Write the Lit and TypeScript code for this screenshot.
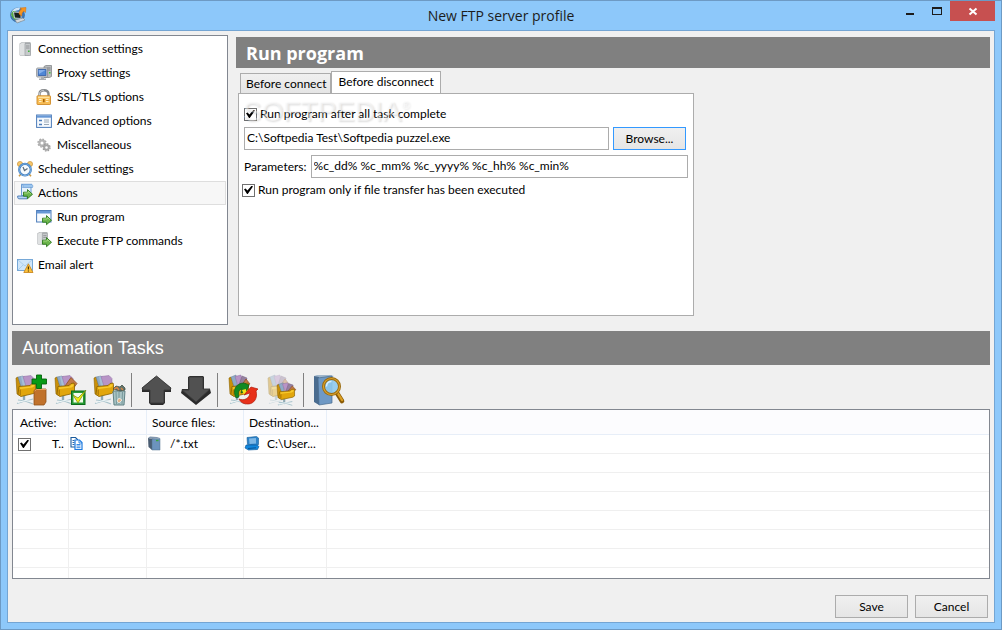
import { LitElement, html, css, svg, nothing } from "lit";
import { customElement, property, state } from "lit/decorators.js";
import { classMap } from "lit/directives/class-map.js";

const serverBody = svg`
  <path d="M2.500 2.500 5 1h8.500v12.500L11 15H3.500l-1-1z" fill="#b4b7b9"/>
  <path d="M3 3 5.500 1.500h2.500v13H3.500L3 14z" fill="#dfe1e2"/>
  <path d="M8 2.500h5.500v12H8z" fill="#c6c9cb" stroke="#999da0" stroke-width=".7"/>
  <path d="M9 5h3.500M9 7h3.500" stroke="#85898c" stroke-width=".8"/>
  <path d="M11 9.500h1.600v1.600H11z" fill="#3fb43b"/>`;

const greenArrow = svg`
  <path d="M6.5 9.2h4V6.6l5 4.7-5 4.4v-2.5h-4z" fill="#6cb54c" stroke="#2f7a1f" stroke-width=".9" stroke-linejoin="round"/>
  <path d="M7.2 10h4V8.3l2.6 2.5" fill="none" stroke="#b2e08f" stroke-width=".8"/>`;

const wires = svg`
  <path d="M8 21v6" stroke="#8fa9b3" stroke-width="2.400"/>
  <path d="M2 26l8 1 7-2M1 29.500l8-2.500 8 3" stroke="#a9c4cc" stroke-width="1.200" fill="none"/>
  <path d="M2 28.500l7-2 7 1" stroke="#eef6f8" stroke-width="1" fill="none"/>`;
const folderSide = svg`<path d="M0 4l2-1 3 9v10l-4-2z" fill="#c98f08" stroke="#8a6200" stroke-width=".6"/>`;
const folderFront = svg`
  <path d="M3 12.500 14 11.500l2-2 3-.5.500 1.500V18l-2 1.500L5 22.500 2 20.500z" fill="#e2a60c" stroke="#8a6200" stroke-width=".8" stroke-linejoin="round"/>
  <path d="M3.500 13.500 14.500 12.500l2-2 2-.3v1.800l-2 1.500-12 1.500z" fill="#f8cb2e"/>
  <path d="M3.500 16v4.500l1.500 1V15.500z" fill="#b57f05"/>`;
const papers = svg`
  ${folderSide}
  <path d="M2 3l5-1 1 10-3 .5z" fill="#8fabc6" stroke="#65809c" stroke-width=".5"/>
  <path d="M5 2.500 9 2l1 10-3 .5z" fill="#a6bfd6"/>
  <path d="M7 2.500 15 1.500l3 3v5l-3 2.500-5 .3z" fill="#b894c6" stroke="#8f6da2" stroke-width=".5"/>`;
const folder = svg`${wires}${papers}${folderFront}`;
const fannedFolder = svg`
  ${wires}${folderSide}
  <path d="M2 3l5-2 1 11-3 .5z" fill="#8fabc6" stroke="#65809c" stroke-width=".5"/>
  <path d="M6 2.500 12 1l1 9-4 2z" fill="#b894c6" stroke="#8f6da2" stroke-width=".5"/>
  <path d="M10 11 13 2l5 2-2 7z" fill="#96809f" stroke="#6e5c80" stroke-width=".5"/>
  <path d="M12 12 17 5l4 5-3 2z" fill="#c27a48" stroke="#87491d" stroke-width=".7"/>
  ${folderFront}`;

const art = {
  app: svg`
    <circle cx="7.500" cy="8" r="7" fill="#3f78b8" stroke="#2e5f96" stroke-width=".6"/>
    <path d="M2 4c2-3 5-4 8-3L9 3 5 4 3 7 1 9z" fill="#cfe3f5"/>
    <path d="M1 7l2-3 3 0-1 4 2 5c-3 0-5-2-6-6z" fill="#55a845"/>
    <path d="M3.500 5 11 5.500v6L4.500 11z" fill="#17221f" stroke="#d4dce2" stroke-width=".9"/>
    <path d="M5 13 13 11l2 2-8 3z" fill="#d5d9dc" stroke="#7b848b" stroke-width=".6"/>
    <path d="M10 1l6-.5-.5 5-1.600-1.500c-1.800 1.500-2.400 3-2 5L9 7c0-2 .8-4 2.900-5.200z" fill="#f7941d" stroke="#d46b08" stroke-width=".5"/>`,
  server: serverBody,
  proxy: svg`
    <path d="M8 1.500 10 .5h5.500v11l-2 1H8z" fill="#b9bcbe" stroke="#85898c" stroke-width=".8"/>
    <path d="M11 3h3.500M11 5h3.500" stroke="#6e7275" stroke-width=".8"/><path d="M13 7h1.500v1.500H13z" fill="#3fc43b"/>
    <rect x=".6" y="3" width="11" height="9" rx="1" fill="#d3d6da" stroke="#85898c" stroke-width=".8"/>
    <rect x="2.200" y="4.600" width="7.800" height="5.800" fill="#4f87d6" stroke="#2d5aa4" stroke-width=".8"/>
    <path d="M2.700 5h6.800L3 9z" fill="#86b1ec"/><path d="M5 12h3v1.600h2v1.500H3v-1.500h2z" fill="#aaaeb2"/>`,
  lock: svg`
    <path d="M3.500 8V5C3.500 2.700 5.200 1.300 8 1.300s4.500 1.400 4.500 3.700v3" fill="none" stroke="#85888b" stroke-width="2.400"/>
    <path d="M3.500 7V5C3.500 2.700 5.200 1.300 8 1.300" fill="none" stroke="#c9cbcd" stroke-width="1"/>
    <rect x="1" y="6.800" width="13.500" height="8.700" rx=".6" fill="#f8bd55" stroke="#cf8a28" stroke-width=".9"/>
    <path d="M2 7.600h11.500v1.500H2z" fill="#ffe3a1"/>
    <path d="M3 10.500h2.500M3 12.500h2.500M10 10.500h2.500M10 12.500h2.500" stroke="#fff0cb" stroke-width="1"/>
    <path d="M7 10h1.600v3.200H7z" fill="#a56108"/>`,
  form: svg`
    <rect x=".6" y="2" width="14.800" height="12.400" fill="#f5f9fd" stroke="#4c7cba" stroke-width="1"/>
    <path d="M1 2.500h14v2.200H1z" fill="#6798d6"/>
    <path d="M3 7.500h3M3 11.500h3" stroke="#4c7cba" stroke-width="1.500"/>
    <path d="M8 7h5M8 9h5M8 11.500h5" stroke="#9aa8b7" stroke-width="1"/>`,
  gears: svg`
    <circle cx="6" cy="6" r="2.600" fill="none" stroke="#b4b4b4" stroke-width="2.200"/>
    <circle cx="6" cy="6" r="4" fill="none" stroke="#a9a9a9" stroke-width="1.300" stroke-dasharray="1.600 1.540"/>
    <circle cx="10.500" cy="10.500" r="2.300" fill="none" stroke="#a6a6a6" stroke-width="2"/>
    <circle cx="10.500" cy="10.500" r="3.600" fill="none" stroke="#999" stroke-width="1.200" stroke-dasharray="1.450 1.380"/>`,
  clock: svg`
    <circle cx="3" cy="3" r="2.600" fill="#f5c56a" stroke="#c48a2b" stroke-width=".6"/>
    <circle cx="13" cy="3" r="2.600" fill="#f5c56a" stroke="#c48a2b" stroke-width=".6"/>
    <path d="M4 13l-2 2.300M12 13l2 2.300" stroke="#c99a48" stroke-width="1.600"/>
    <circle cx="8" cy="8.700" r="5.800" fill="#f6fafd" stroke="#3f7cbd" stroke-width="2.200"/>
    <circle cx="8" cy="8.700" r="5.900" fill="none" stroke="#7fb2e3" stroke-width=".9"/>
    <path d="M6 6 7.500 9.500 10.500 7.500" fill="none" stroke="#5b6a78" stroke-width="1.200"/>`,
  actions: svg`<g transform="translate(0 -2)">
    <path d="M4.500 1.500h10.500c-1 .7-1 1.500-1 2.500v8.500H4.500z" fill="#e6f1fc" stroke="#5c92cf" stroke-width=".9"/>
    <path d="M4.500 1.200c1.600.3 1.700 2.500 1 3.300h10c.5-1 .5-2.700-1-3.300z" fill="#9cc6ef" stroke="#5c92cf" stroke-width=".6"/>
    <path d="M.7 13h9.500v2.800H2c-1 0-1.500-1-1.300-2.800z" fill="#b7d5f4" stroke="#4676b3" stroke-width=".9"/>${greenArrow}</g>`,
  run: svg`
    <rect x=".6" y="1.500" width="14.400" height="11.500" fill="#f8fbff" stroke="#4c7cba"/>
    <path d="M1 2h13.700v2.500H1z" fill="#6798d6"/>${greenArrow}`,
  exec: svg`<g transform="translate(0 -2)"><g transform="translate(-1 0) scale(.92)">${serverBody}</g>${greenArrow}</g>`,
  email: svg`
    <rect x=".5" y="2.500" width="15" height="11" fill="#cfe6fa" stroke="#6aa0d3" stroke-width=".9"/>
    <path d="M1 3l7 6 7-6M1 13l5-5M15 13l-5-5" fill="none" stroke="#a3c8e8" stroke-width=".8"/>
    <path d="M11.400 6.800 16 15.500H6.800z" fill="#fbc13c" stroke="#c77f12" stroke-width=".8" stroke-linejoin="round"/>
    <path d="M11.400 9.500v3M11.400 13.400v1.200" stroke="#4c3600" stroke-width="1.200"/>`,
  copy: svg`
    <path d="M1 1.500h4.500l2 2v7.500H1z" fill="#fff" stroke="#17589c" stroke-width="1.100"/>
    <path d="M2.500 4.500h2M2.500 6.500h2M2.500 8.500h2" stroke="#17589c" stroke-width=".9"/>
    <path d="M5 4h4.500L12 6.500V13.500H5z" fill="#fff" stroke="#1e7be0" stroke-width="1.200"/>
    <path d="M9 4.500V7h3M6.500 8.500h4M6.500 10h4M6.500 11.700h4" fill="none" stroke="#1e7be0" stroke-width=".9"/>`,
  host: svg`
    <path d="M0 2 2 .5 9 1l3 1-8 1z" fill="#8196ae"/><path d="M0 2l4 1v11L.5 11z" fill="#4a5d72"/>
    <path d="M4 3l8-.5v11.500H4z" fill="#6c93bd" stroke="#50708f" stroke-width=".5"/>
    <path d="M8 4.500h2.500" stroke="#39a53a" stroke-width="1.400"/>`,
  pc: svg`
    <path d="M2 1.500 11.500.5 13.500 2v6.500l-2 1L2.500 8.500z" fill="#2c83c9" stroke="#135a97" stroke-width=".6"/>
    <path d="M4 2.500l7-.5v5.500L4.500 8z" fill="#7fb8e6"/>
    <path d="M1 9l11 0 2 1.500-1.500 3-9 .5L0 12z" fill="#1287dd" stroke="#0b5596" stroke-width=".6"/>
    <path d="M3 12.500l8-.7" stroke="#0b5596" stroke-width="1"/>`,
  add: svg`${folder}
    <path d="M18 16.500 20 15h10v13l-2 3H18z" fill="#c0722c" stroke="#8f501a" stroke-width=".8"/><path d="M18.500 17l2-1.500H30" stroke="#e5a262" fill="none"/>
    <path d="M20.500 1h5v4h5v5h-5v4.500h-5V10H16V5h4.500z" fill="#079a16" stroke="#04640c" stroke-width=".9"/>`,
  edit: svg`${wires}${papers}
    <path d="M10 12l6-8.500 6 6-3 4-6 1z" fill="#c27a48" stroke="#87491d" stroke-width=".7"/>${folderFront}
    <rect x="16.500" y="17" width="13.500" height="13.500" fill="#269b35" stroke="#0c6a19"/>
    <rect x="18.500" y="19" width="9.500" height="9.500" fill="#f3fbe9"/>
    <path d="M18 21l5 3 8-8-8 13z" fill="#f6ec12" stroke="#6d8b0a" stroke-width=".7"/>`,
  remove: svg`${folder}
    <path d="M19 17h12l-1 14h-10z" fill="#a8c3c4" stroke="#55777a" stroke-width=".9"/>
    <path d="M22 18l.5 12M25 18v12M28.500 18l-.5 12" stroke="#6b8e91" stroke-width=".8"/>
    <path d="M25 24l3 2-3 3-2-2z" stroke="#fff" fill="#e2b489" stroke-width=".6"/>
    <path d="M19 15l3-3 4 1 2-2 3 3v2l-5 1z" fill="#64756b" stroke="#36463c" stroke-width=".7"/>
    <path d="M20 15l3-1.500 2 2.500M27 14l2 2" stroke="#d98646" stroke-width="1.400" fill="none"/>`,
  up: svg`<path d="M14 3h2l14 11v4h-6v11l-2 2H10l-2-2V18H1v-4z" fill="#2b2b2b"/>
    <path d="M15.500 2 30 14l-1 2h-6v13H9V16H2l-1-2z" fill="#515151" stroke="#3a3a3a" stroke-width=".9" stroke-linejoin="round"/>`,
  down: svg`<path d="M8 3l2-1h13l1 1v12h6l1 4-15 12L1 19l1-4h6z" fill="#2b2b2b"/>
    <path d="M9 3h14v12h7L16 28 2 16h7z" fill="#515151" stroke="#3a3a3a" stroke-width=".9" stroke-linejoin="round"/>`,
  refresh: svg`<g transform="translate(2 0)">${fannedFolder}</g>
    <path d="M9 24C5 16 9 9 17 9l5 2-2 5-3 2-3 1 1-4c-4 1-4 4-3 8z" fill="#118a22" stroke="#0b5c16" stroke-width=".7"/>
    <path d="M15 16l4-1v3l-2 3z" fill="#f2e21b"/>
    <path d="M17 21l7-8 7 2-2 2c2 7-2 13-8 13-4 0-7-1-9-5 5 2 10 0 11-6z" fill="#e8311a" stroke="#b01c0c" stroke-width=".7"/>`,
  duplicate: svg`<g opacity=".4" transform="translate(2 0)">${fannedFolder}</g>
    <g transform="translate(11 8) scale(.9 .78)">${fannedFolder}</g>`,
  search: svg`
    <path d="M1 2l3-1h13l4 1-3 2H5z" fill="#9fb6cb"/><path d="M1 2l5 1v28l-5-3z" fill="#4a6c8f"/>
    <path d="M5 4l14-2v27L6 31z" fill="#6f99c4" stroke="#486b8e" stroke-width=".7"/>
    <path d="M24 19l5 8" stroke="#8a5b06" stroke-width="4.600" stroke-linecap="round"/>
    <path d="M24 18l5 8" stroke="#dc9f22" stroke-width="2.300" stroke-linecap="round"/>
    <circle cx="18.500" cy="12.500" r="8" fill="#8fcaec" fill-opacity=".9" stroke="#9a6a0c" stroke-width="3"/>
    <circle cx="18.500" cy="12.500" r="8" fill="none" stroke="#d9a12b" stroke-width="1.200"/>
    <path d="M13.500 12.500c0-3 2-5 5-5" stroke="#d8f0fc" stroke-width="1.400" fill="none"/>`,
};
type IconName = keyof typeof art;

const icon = (name: IconName, size = 16) => html`<svg
  width=${size} height=${size} viewBox="0 0 ${size} ${size}" aria-hidden="true">${art[name]}</svg>`;

interface NavItem { id: string; label: string; icon: IconName; children?: NavItem[] }

const NAV: NavItem[] = [
  { id: "connection", label: "Connection settings", icon: "server", children: [
    { id: "proxy", label: "Proxy settings", icon: "proxy" },
    { id: "ssl", label: "SSL/TLS options", icon: "lock" },
    { id: "advanced", label: "Advanced options", icon: "form" },
    { id: "misc", label: "Miscellaneous", icon: "gears" },
  ] },
  { id: "scheduler", label: "Scheduler settings", icon: "clock" },
  { id: "actions", label: "Actions", icon: "actions", children: [
    { id: "run", label: "Run program", icon: "run" },
    { id: "exec", label: "Execute FTP commands", icon: "exec" },
  ] },
  { id: "email", label: "Email alert", icon: "email" },
];

const controls = css`
  *, *::before, *::after { box-sizing: border-box; }
  button, input { font: inherit; color: inherit; margin: 0; }
  svg { display: block; flex: none; overflow: visible; }
  .check {
    appearance: none; flex: none; width: 13px; height: 13px;
    border: 1px solid #707070; background: #fff; display: inline-grid; place-items: center;
  }
  .check:checked::after {
    content: ""; width: 9px; height: 9px; background: #000;
    clip-path: polygon(0 42%, 18% 34%, 38% 56%, 84% 4%, 100% 10%, 42% 94%, 34% 94%);
  }
  .push {
    height: 23px; width: 73px; padding: 0; border: 1px solid #acacac;
    background: linear-gradient(#f0f0f0, #e5e5e5);
  }
  .push.primary { border-color: #3399ff; }
`;

@customElement("settings-tree")
class SettingsTree extends LitElement {
  @state() selected = "actions";

  static styles = [controls, css`
    :host { display: block; border: 1px solid #828790; background: #fff; padding: 1px; }
    ul { list-style: none; margin: 0; padding: 0; }
    .item {
      display: flex; align-items: center; gap: 5px; width: 100%; height: 24px;
      padding: 0 2px; border: 1px solid transparent; background: none; text-align: left;
    }
    .nested { padding-left: 21px; }
    .selected { background: #f7f7f7; border-color: #dedede; }
  `];

  private renderItems(items: NavItem[], nested = false): unknown {
    return html`<ul role=${nested ? "group" : "tree"}>
      ${items.map((item) => html`<li role="none">
        <button role="treeitem" aria-selected=${this.selected === item.id}
          class=${classMap({ item: true, nested, selected: this.selected === item.id })}
          @click=${() => (this.selected = item.id)}>${icon(item.icon)}<span>${item.label}</span></button>
        ${item.children ? this.renderItems(item.children, true) : nothing}
      </li>`)}
    </ul>`;
  }

  render() { return this.renderItems(NAV); }
}

@customElement("run-program")
class RunProgram extends LitElement {
  @state() tab = 1;

  static styles = [controls, css`
    :host { display: flex; flex-direction: column; align-items: stretch; }
    h2 {
      margin: 0; height: 31px; padding: 0 10px; background: #808080; color: #fff;
      font: bold 18px/32px "Open Sans", sans-serif;
    }
    .tabs { display: flex; align-items: flex-end; height: 22px; margin-top: 3px; padding-left: 4px; }
    .tab {
      height: 20px; padding: 0 4px 0 5px; white-space: nowrap; border: 1px solid #acacac; border-bottom: 0;
      background: linear-gradient(#f0f0f0, #e5e5e5);
    }
    .tab + .tab { border-left: 0; }
    .tab.active {
      position: relative; height: 23px; margin-bottom: -1px; padding: 0 6px 2px;
      border-left: 1px solid #acacac; background: #fff;
    }
    .panel {
      position: relative; flex: 1; width: min(456px, 100%); margin-left: 2px; padding: 12px 3px;
      border: 1px solid #acacac; background: #fff;
    }
    .fields { display: flex; flex-direction: column; padding: 0 2px; }
    .option { display: flex; align-items: center; gap: 3px; height: 16px; }
    .row { display: flex; align-items: center; gap: 4px; height: 23px; margin-top: 5px; }
    .path { margin-right: 2px; }
    .text {
      flex: 1; min-width: 0; height: 23px; padding: 0 2px 2px; border: 1px solid #acacac; background: #fff; outline: 0;
    }
    .last { margin-top: 4px; }
    .mark {
      position: absolute; left: 4px; top: 2px; color: rgb(255 255 255 / 45%); pointer-events: none;
      font: 28px/32px "Liberation Sans", sans-serif; text-shadow: 1px 1px 2px rgb(0 0 0 / 14%);
    }
    .mark sup { font-size: 11px; line-height: 0; vertical-align: 12px; }
  `];

  render() {
    const tabs = ["Before connect", "Before disconnect"];
    return html`
      <h2>Run program</h2>
      <div class="tabs" role="tablist">
        ${tabs.map((label, i) => html`<button role="tab" aria-selected=${this.tab === i}
          class=${classMap({ tab: true, active: this.tab === i })}
          @click=${() => (this.tab = i)}>${label}</button>`)}
      </div>
      <div class="panel" role="tabpanel">
        <div class="fields">
          <label class="option"><input class="check" type="checkbox" checked>Run program after all task complete</label>
          <div class="row path">
            <input class="text" aria-label="Program path" value="C:\\Softpedia Test\\Softpedia puzzel.exe">
            <button class="push primary">Browse...</button>
          </div>
          <div class="row">
            <label for="params">Parameters:</label>
            <input class="text" id="params" value="%c_dd% %c_mm% %c_yyyy% %c_hh% %c_min%">
          </div>
        </div>
        <label class="option last"><input class="check" type="checkbox" checked>Run program only if file transfer has been executed</label>
        <span class="mark" aria-hidden="true">SOFTPEDIA<sup>®</sup></span>
      </div>`;
  }
}

@customElement("task-list")
class TaskList extends LitElement {
  static styles = [controls, css`
    :host { display: flex; flex-direction: column; min-height: 0; }
    h2 {
      margin: 0; height: 34px; padding: 0 10px; background: #808080; color: #fff;
      font: 18px/34px "Liberation Sans", sans-serif;
    }
    .toolbar { display: flex; align-items: center; height: 44px; padding-top: 6px; }
    .tool { padding: 0 3px 0 4px; border: 0; background: none; }
    .divider { width: 1px; height: 34px; margin: 0 5px 0 2px; background: #808080; }
    .list { flex: 1 1 0; min-height: 0; overflow: hidden; border: 1px solid #828790; background: #fff; }
    table { width: 100%; border-collapse: separate; border-spacing: 0; table-layout: fixed; }
    .c1 { width: 56px; } .c2 { width: 78px; } .c3 { width: 97px; } .c4 { width: 83px; }
    th, td {
      padding: 0; text-align: left; font-weight: normal; white-space: nowrap; overflow: hidden;
      border-right: 1px solid #efefef; border-bottom: 1px solid #efefef;
    }
    th { height: 25px; padding: 2px 0 0 5px; background: #fcfcfe; border-color: #e7eef8; }
    th:first-child { padding-left: 7px; }
    td { height: 19px; }
    th:last-child, td:last-child { border-right: 0; }
    .cell { display: flex; align-items: center; height: 18px; padding-left: 1px; gap: 6px; }
    .active { padding-left: 5px; gap: 21px; }
  `];

  render() {
    const groups: [IconName, string][][] = [
      [["add", "Add task"], ["edit", "Edit task"], ["remove", "Delete task"]],
      [["up", "Move up"], ["down", "Move down"]],
      [["refresh", "Refresh"], ["duplicate", "Duplicate"]],
      [["search", "Browse server"]],
    ];
    return html`
      <h2>Automation Tasks</h2>
      <div class="toolbar" role="toolbar">
        ${groups.map((group, i) => html`${i ? html`<span class="divider"></span>` : nothing}
          ${group.map(([name, label]) => html`<button class="tool" aria-label=${label}>${icon(name, 32)}</button>`)}`)}
      </div>
      <div class="list">
        <table>
          <colgroup><col class="c1"><col class="c2"><col class="c3"><col class="c4"><col></colgroup>
          <thead><tr><th>Active:</th><th>Action:</th><th>Source files:</th><th>Destination...</th><th></th></tr></thead>
          <tbody>
            <tr>
              <td><div class="cell active"><input class="check" type="checkbox" aria-label="Task active" checked><span>T..</span></div></td>
              <td><div class="cell">${icon("copy")}<span>Downl...</span></div></td>
              <td><div class="cell">${icon("host")}<span>/*.txt</span></div></td>
              <td><div class="cell">${icon("pc")}<span>C:\\User...</span></div></td>
              <td></td>
            </tr>
            ${Array.from({ length: 7 }, () => html`<tr><td></td><td></td><td></td><td></td><td></td></tr>`)}
          </tbody>
        </table>
      </div>`;
  }
}

@customElement("app-root")
class AppRoot extends LitElement {
  @property() heading = "New FTP server profile";

  static styles = [controls, css`
    :host {
      display: flex; flex-direction: column; box-sizing: border-box; height: 100vh; min-height: 560px;
      border: 1px solid #6d9ac4; background: #8dc8fa; padding: 0 6px 6px; color: #000;
      font: 12px/16px Lato, "Open Sans", sans-serif;
    }
    .titlebar { display: grid; grid-template-columns: 1fr auto 1fr; height: 29px; flex: none; }
    .logo { padding: 6px 3px; }
    h1 { margin: 0; font: 14px/30px "Open Sans", sans-serif; color: #1c1c1c; }
    .controls { display: flex; justify-content: flex-end; align-items: flex-start; }
    .control { width: 27px; height: 20px; padding: 0; border: 0; background: none; display: grid; place-items: center; }
    .close { width: 45px; background: #c75050; }
    main {
      flex: 1; min-height: 0; display: flex; flex-direction: column; border: 1px solid #74a5d3;
      background: #f0f0f0; padding: 4px 4px 3px;
    }
    .settings { display: grid; grid-template-columns: 216px minmax(0, 1fr); gap: 8px; height: 290px; flex: none; }
    run-program { padding: 2px 0 9px; }
    task-list { flex: 1; margin-top: 6px; }
    footer { display: flex; justify-content: flex-end; gap: 7px; padding: 16px 2px 1px; }
  `];

  render() {
    return html`
      <header class="titlebar">
        <div class="logo">${icon("app")}</div>
        <h1>${this.heading}</h1>
        <div class="controls">
          <button class="control" aria-label="Minimize"><svg width="27" height="20"><path d="M10 12h8v2h-8z" fill="#1c1c1c"/></svg></button>
          <button class="control" aria-label="Maximize"><svg width="27" height="20"><path d="M9 6h10v8H9zM10 8v5h8V8z" fill="#1c1c1c" fill-rule="evenodd"/></svg></button>
          <button class="control close" aria-label="Close"><svg width="45" height="20"><path d="M19.500 7.500l7 6M26.500 7.500l-7 6" stroke="#fff" stroke-width="2"/></svg></button>
        </div>
      </header>
      <main>
        <section class="settings">
          <settings-tree></settings-tree>
          <run-program></run-program>
        </section>
        <task-list></task-list>
        <footer>
          <button class="push">Save</button>
          <button class="push">Cancel</button>
        </footer>
      </main>`;
  }
}
